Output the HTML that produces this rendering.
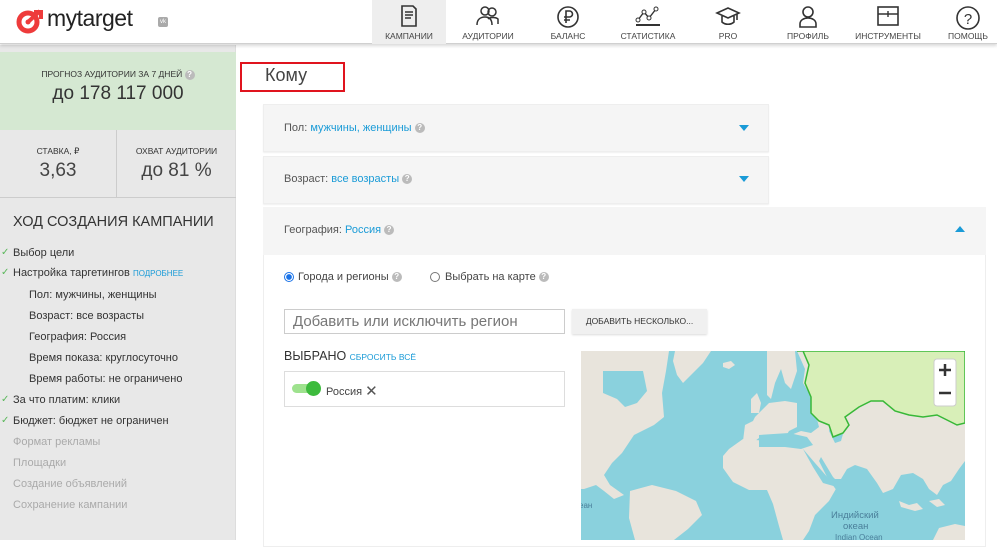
<!DOCTYPE html>
<html><head><meta charset="utf-8"><style>
*{box-sizing:border-box;margin:0;padding:0}
body{width:997px;height:540px;overflow:hidden;background:#fff;font-family:"Liberation Sans","DejaVu Sans",sans-serif;color:#333;position:relative}
.a{position:absolute}
.hdr{left:0;top:0;width:997px;height:44px;background:#fff;border-bottom:1px solid #d0d0d0;box-shadow:0 2px 3px rgba(0,0,0,.15);z-index:2}
.nav{top:0;height:44px;width:80px;text-align:center;font-size:8.5px;color:#444}
.nav svg{display:block;margin:5px auto 0}
.nav span{position:absolute;left:0;right:0;top:31px}
.side{left:0;top:45px;width:236px;height:495px;background:#e8e8e8;border-right:1px solid #ddd}
.li{left:13px;font-size:11px;color:#333}
.li.s{left:29px}
.li.g{color:#aaa}
.ck{color:#5cb85c;position:absolute;left:-12px;font-size:10px}
.q{display:inline-block;width:10px;height:10px;border-radius:50%;background:#bbb;color:#fff;font-size:8px;line-height:10px;text-align:center;vertical-align:middle;font-weight:bold}
.pan{background:#f5f5f5;border:1px solid #eee;box-shadow:0 1px 1px rgba(0,0,0,.06)}
.pt{font-size:11px;color:#555}
.bl{color:#1a9bd7}
.tri{width:0;height:0;border-left:5px solid transparent;border-right:5px solid transparent}
</style></head><body>
<div class="a hdr">
 <svg class="a" style="left:16px;top:8px" width="30" height="26" viewBox="0 0 30 26"><circle cx="12" cy="14" r="9" fill="none" stroke="#ee3b3b" stroke-width="5"/><circle cx="12" cy="14" r="2.5" fill="#ee3b3b"/><path d="M12 14 L24 3 M18 4 h7 v7" stroke="#ee3b3b" stroke-width="4" fill="none"/></svg>
 <div class="a" style="left:47px;top:5px;font-size:23px;color:#222;letter-spacing:-0.5px">mytarget</div>
 <div class="a" style="left:158px;top:17px;width:10px;height:10px;background:#aaa;border-radius:2px;color:#fff;font-size:6px;line-height:10px;text-align:center">vk</div>
 <div class="a nav" style="left:372px;width:74px;background:#eee"><svg width="20" height="22" viewBox="0 0 20 22"><path d="M3 1h11l3 3v17H3z M6 7h8M6 10h8M6 13h6" stroke="#333" stroke-width="1.6" fill="none"/></svg><span>КАМПАНИИ</span></div>
 <div class="a nav" style="left:448px"><svg width="28" height="22" viewBox="0 0 28 22"><circle cx="11" cy="6" r="4" fill="none" stroke="#333" stroke-width="1.5"/><circle cx="18" cy="7" r="4" fill="none" stroke="#333" stroke-width="1.5"/><path d="M3 20c0-6 4-8 8-8s7 2 7 8M14 14c2-2 8-2 10 0v5" fill="none" stroke="#333" stroke-width="1.5"/></svg><span>АУДИТОРИИ</span></div>
 <div class="a nav" style="left:528px"><svg width="24" height="24" viewBox="0 0 24 24"><circle cx="12" cy="12" r="10" fill="none" stroke="#333" stroke-width="1.6"/><path d="M10 18V6h3.5a3 3 0 010 6H8M8 15h6" fill="none" stroke="#333" stroke-width="1.6"/></svg><span>БАЛАНС</span></div>
 <div class="a nav" style="left:608px"><svg width="26" height="22" viewBox="0 0 26 22"><path d="M3 15l6-8 5 6 7-9" fill="none" stroke="#333" stroke-width="1.4"/><circle cx="3" cy="15" r="2" fill="#fff" stroke="#333"/><circle cx="9" cy="7" r="2" fill="#fff" stroke="#333"/><circle cx="14" cy="13" r="2" fill="#fff" stroke="#333"/><circle cx="21" cy="4" r="2" fill="#fff" stroke="#333"/><path d="M1 20h24" stroke="#333" stroke-width="2"/></svg><span>СТАТИСТИКА</span></div>
 <div class="a nav" style="left:688px"><svg width="26" height="22" viewBox="0 0 26 22"><path d="M2 8l11-5 11 5-11 5z M7 11v6c3 3 9 3 12 0v-6 M22 9v6" fill="none" stroke="#333" stroke-width="1.6"/></svg><span>PRO</span></div>
 <div class="a nav" style="left:768px"><svg width="22" height="24" viewBox="0 0 22 24"><circle cx="11" cy="7" r="5" fill="none" stroke="#333" stroke-width="1.6"/><path d="M3 22v-3c0-4 4-6 8-6s8 2 8 6v3z" fill="none" stroke="#333" stroke-width="1.6"/></svg><span>ПРОФИЛЬ</span></div>
 <div class="a nav" style="left:848px"><svg width="24" height="22" viewBox="0 0 24 22"><rect x="2" y="2" width="20" height="18" fill="none" stroke="#333" stroke-width="1.6"/><path d="M2 9h20M12 6v6" stroke="#333" stroke-width="1.4"/></svg><span>ИНСТРУМЕНТЫ</span></div>
 <div class="a nav" style="left:928px"><svg width="26" height="26" viewBox="0 0 26 26"><circle cx="13" cy="13" r="11" fill="none" stroke="#333" stroke-width="1.6"/><text x="13" y="19" font-size="15" text-anchor="middle" fill="#333" font-family="Liberation Sans">?</text></svg><span>ПОМОЩЬ</span></div>
</div>

<div class="a side">
 <div class="a" style="left:0;top:7px;width:236px;height:78px;background:#d5e8d2;text-align:center">
  <div style="font-size:8.5px;margin-top:17px;color:#333">ПРОГНОЗ АУДИТОРИИ ЗА 7 ДНЕЙ <span class="q">?</span></div>
  <div style="font-size:19px;margin-top:3px;color:#333">до 178 117 000</div>
 </div>
 <div class="a" style="left:0;top:85px;width:236px;height:68px;border-bottom:1px solid #ccc"></div>
 <div class="a" style="left:116px;top:85px;width:1px;height:67px;background:#ccc"></div>
 <div class="a" style="left:0;top:101px;width:116px;text-align:center;font-size:8.5px">СТАВКА, ₽</div>
 <div class="a" style="left:0;top:115px;width:116px;text-align:center;font-size:19px;color:#444">3,63</div>
 <div class="a" style="left:117px;top:101px;width:119px;text-align:center;font-size:8.5px">ОХВАТ АУДИТОРИИ</div>
 <div class="a" style="left:117px;top:115px;width:119px;text-align:center;font-size:19px;color:#444">до 81 %</div>
 <div class="a" style="left:13px;top:169px;font-size:14.5px;color:#333">ХОД СОЗДАНИЯ КАМПАНИИ</div>
</div>
<div class="a li" style="top:247px"><span class="ck">✓</span>Выбор цели</div>
<div class="a li" style="top:267px"><span class="ck">✓</span>Настройка таргетингов <span class="bl" style="font-size:8px">ПОДРОБНЕЕ</span></div>
<div class="a li s" style="top:289px">Пол: мужчины, женщины</div>
<div class="a li s" style="top:310px">Возраст: все возрасты</div>
<div class="a li s" style="top:331px">География: Россия</div>
<div class="a li s" style="top:352px">Время показа: круглосуточно</div>
<div class="a li s" style="top:373px">Время работы: не ограничено</div>
<div class="a li" style="top:394px"><span class="ck">✓</span>За что платим: клики</div>
<div class="a li" style="top:415px"><span class="ck">✓</span>Бюджет: бюджет не ограничен</div>
<div class="a li g" style="top:436px">Формат рекламы</div>
<div class="a li g" style="top:457px">Площадки</div>
<div class="a li g" style="top:478px">Создание объявлений</div>
<div class="a li g" style="top:499px">Сохранение кампании</div>

<div class="a" style="left:240px;top:62px;width:105px;height:30px;border:2px solid #e0141e"></div>
<div class="a" style="left:265px;top:65px;font-size:18px;color:#444">Кому</div>

<div class="a pan" style="left:263px;top:104px;width:506px;height:48px"></div>
<div class="a pt" style="left:284px;top:122px">Пол: <span class="bl">мужчины, женщины</span> <span class="q">?</span></div>
<div class="a tri" style="left:739px;top:125px;border-top:6px solid #1a9bd7"></div>
<div class="a pan" style="left:263px;top:156px;width:506px;height:48px"></div>
<div class="a pt" style="left:284px;top:173px">Возраст: <span class="bl">все возрасты</span> <span class="q">?</span></div>
<div class="a tri" style="left:739px;top:176px;border-top:6px solid #1a9bd7"></div>

<div class="a" style="left:263px;top:207px;width:723px;height:340px;border:1px solid #eee;background:#fff"></div>
<div class="a" style="left:263px;top:207px;width:723px;height:48px;background:#f5f5f5"></div>
<div class="a pt" style="left:284px;top:224px">География: <span class="bl">Россия</span> <span class="q">?</span></div>
<div class="a tri" style="left:955px;top:226px;border-bottom:6px solid #1a9bd7"></div>

<div class="a" style="left:284px;top:272px;width:10px;height:10px;border-radius:50%;border:1px solid #1a73e8;background:radial-gradient(#1a73e8 45%,#fff 55%)"></div>
<div class="a pt" style="left:298px;top:271px;color:#444">Города и регионы <span class="q">?</span></div>
<div class="a" style="left:430px;top:272px;width:10px;height:10px;border-radius:50%;border:1px solid #777"></div>
<div class="a pt" style="left:445px;top:271px;color:#444">Выбрать на карте <span class="q">?</span></div>

<div class="a" style="left:284px;top:309px;width:281px;height:25px;border:1px solid #ccc;font-size:15px;color:#777;padding:3px 8px">Добавить или исключить регион</div>
<div class="a" style="left:572px;top:309px;width:135px;height:25px;background:#f0f0f0;box-shadow:0 1px 2px rgba(0,0,0,.15);font-size:8.5px;line-height:25px;text-align:center;color:#333">ДОБАВИТЬ НЕСКОЛЬКО...</div>

<div class="a" style="left:284px;top:349px;font-size:12.5px;color:#333">ВЫБРАНО <span class="bl" style="font-size:8.5px">СБРОСИТЬ ВСЁ</span></div>
<div class="a" style="left:284px;top:371px;width:281px;height:36px;border:1px solid #ddd"></div>
<div class="a" style="left:292px;top:384px;width:26px;height:9px;border-radius:5px;background:#9ee28e"></div>
<div class="a" style="left:306px;top:381px;width:15px;height:15px;border-radius:50%;background:#3dbb3d"></div>
<div class="a" style="left:326px;top:382px;font-size:11px;color:#444">Россия <span style="font-size:15px;color:#555;vertical-align:-1px">✕</span></div>

<svg class="a" style="left:581px;top:351px" width="384" height="189" viewBox="0 0 384 189">
 <rect width="384" height="189" fill="#8ad1dd"/>
 <g fill="#e8e4dc">
  <polygon points="0,0 88,0 85,20 81,42 83,66 73,74 53,84 41,102 31,112 23,124 29,134 43,144 33,148 23,140 15,134 3,138 0,138"/>
  <polygon points="94,0 130,0 122,12 112,22 102,32 96,24 92,10"/>
  <polygon points="142,12 150,10 154,14 148,18 142,16"/>
  <polygon points="186,0 214,0 216,20 210,38 204,32 200,18 194,32 190,48 186,44"/>
  <polygon points="170,48 176,42 180,52 178,62 170,62"/>
  <polygon points="174,66 188,52 204,50 216,52 216,76 208,80 202,90 194,86 188,90 182,84 174,90 162,90 164,74 172,70"/>
  <polygon points="148,98 162,88 186,90 196,94 210,92 222,98 232,116 242,132 256,136 248,150 234,164 228,180 222,189 202,189 198,175 192,153 186,139 168,139 152,131 142,117 142,105"/>
  <polygon points="216,0 384,0 384,110 378,118 370,130 362,134 356,144 348,138 342,128 332,122 320,124 312,138 302,142 296,132 286,118 274,114 266,118 260,128 248,128 234,112 222,98 216,100 212,108 216,92 210,84 220,80 230,82 238,76 234,60 228,42 222,32 224,18"/>
  <polygon points="49,140 71,134 95,140 115,150 121,164 107,178 93,189 54,189 48,167"/>
  <polygon points="352,189 358,177 374,173 384,175 384,189"/>
  <polygon points="318,150 328,154 336,152 342,158 334,160 320,156"/>
  <polygon points="348,150 358,148 364,154 356,156"/>
 </g>
 <g fill="#8ad1dd">
  <polygon points="22,20 62,20 66,40 56,52 44,56 36,48 22,42"/>
  <polygon points="178,84 208,82 226,86 232,94 220,98 204,96 190,96 178,96"/>
  <polygon points="250,70 258,66 264,76 260,90 254,92 248,80"/>
  <polygon points="240,106 252,126 262,136 256,140 246,126 238,110"/>
 </g>
 <polygon points="216,0 384,0 384,72 376,74 356,64 342,66 328,64 314,60 302,50 290,50 278,56 264,66 268,74 262,82 252,86 248,74 238,70 230,62 230,46 224,32 228,14 222,0" fill="#d8efb8" stroke="#38b838" stroke-width="1.5"/>
 <text x="250" y="167" font-size="9.5" fill="#4a7f9a" font-family="Liberation Sans">Индийский</text>
 <text x="262" y="178" font-size="9.5" fill="#4a7f9a" font-family="Liberation Sans">океан</text>
 <text x="254" y="189" font-size="8" fill="#4a7f9a" font-family="Liberation Sans">Indian Ocean</text>
 <text x="-2" y="157" font-size="8" fill="#4a7f9a" font-family="Liberation Sans">еан</text>
 <rect x="353" y="8" width="22" height="47" rx="3" fill="#fff" stroke="#ccc"/>
 <path d="M358 19h12M364 13v12M358 42h12" stroke="#333" stroke-width="2.5"/>
</svg>
</body></html>
